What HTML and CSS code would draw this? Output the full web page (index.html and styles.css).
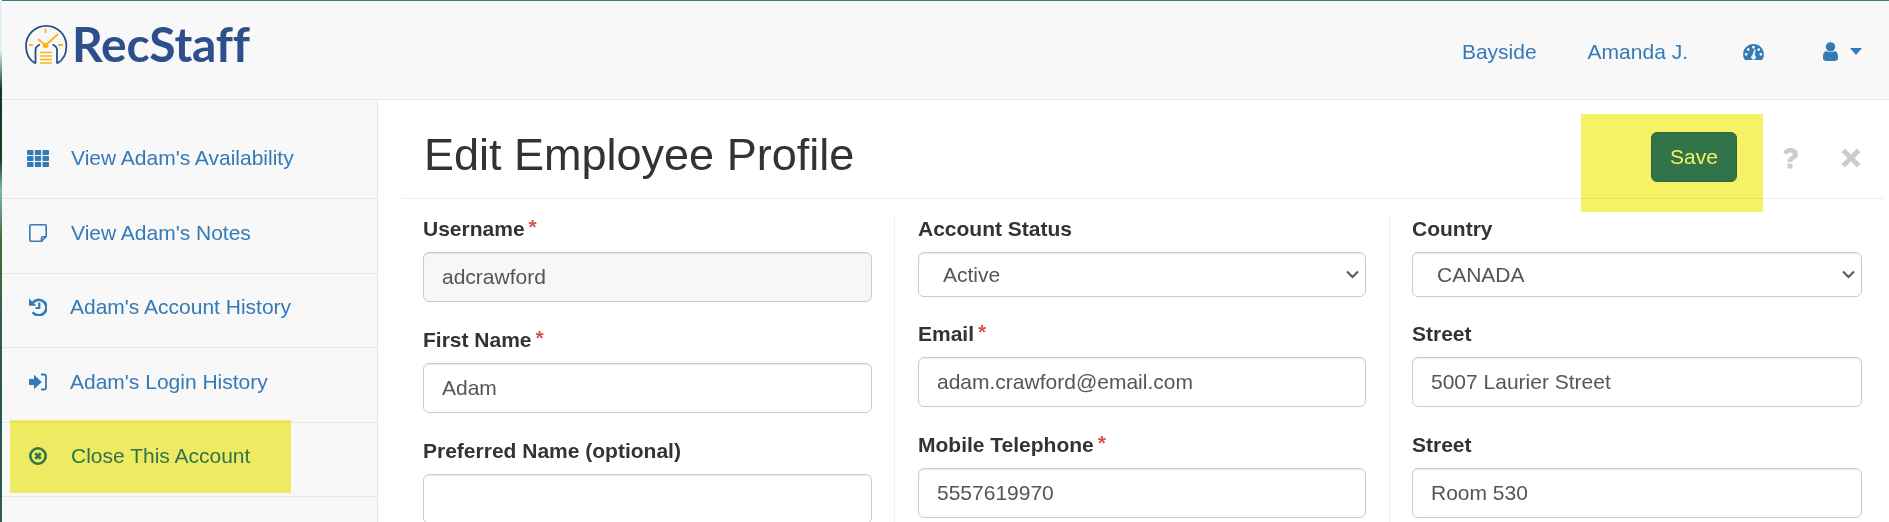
FILE: index.html
```html
<!DOCTYPE html>
<html lang="en">
  <head>
    <meta charset="UTF-8" />
    <meta name="viewport" content="width=device-width, initial-scale=1.0" />
    <title>Edit Employee Profile</title>
    <link rel="stylesheet" href="styles.css">
  </head>
  <body>
    <header class="navbar">
      <a class="brand" href="#">
        <svg class="brand-mark" viewBox="0 0 44 42" width="44" height="42">
          <path d="M10.500 39.500 C4 36 1 29 1 22 A20.200 20.200 0 0 1 41.400 22 C41.400 29 38.500 36 32 39.500" fill="none" stroke="#2d4f8b" stroke-width="1.800" />
          <path d="M10.500 39.500 V26 C10.500 23 12.500 21.500 15 20.500 M32 39.500 V26 C32 23 30 21.500 27.500 20.500" fill="none" stroke="#2d4f8b" stroke-width="1.800" />
          <path d="M13 15 L20.500 21.500 L33 10 M20.500 5 V9 M4 21 H8 M33 21 H38" fill="none" stroke="#fbb616" stroke-width="1.800" />
          <circle cx="20.500" cy="21.500" r="2.800" fill="#fbb616" />
          <path d="M15 28.500 H27 M15 32 H27 M15 35.500 H27 M15 39 H27" fill="none" stroke="#fbb616" stroke-width="1.600" />
        </svg>
        <span class="brand-name">RecStaff</span>
      </a>
      <nav class="top-nav">
        <a href="#" class="nav-bayside">Bayside</a>
        <a href="#" class="nav-user">Amanda J.</a>
        <a href="#" class="nav-dash">
          <svg viewBox="0 0 22 18" width="21" height="17"><path fill="#337ab7" fill-rule="evenodd" d="M11 1 C5 1 0 5.800 0 11.800 C0 13.800 .5 15.700 1.500 17.300 C1.700 17.700 2.100 18 2.500 18 H19.500 C19.900 18 20.300 17.700 20.500 17.300 C21.500 15.700 22 13.800 22 11.800 C22 5.800 17 1 11 1 Z M11 3 A1.500 1.500 0 1 1 11 6 A1.500 1.500 0 0 1 11 3 Z M5.500 5.500 A1.500 1.500 0 1 1 5.500 8.500 A1.500 1.500 0 0 1 5.500 5.500 Z M3.200 10.500 A1.500 1.500 0 1 1 3.200 13.500 A1.500 1.500 0 0 1 3.200 10.500 Z M18.800 10.500 A1.500 1.500 0 1 1 18.800 13.500 A1.500 1.500 0 0 1 18.800 10.500 Z M16.500 5.500 A1.500 1.500 0 1 1 16.500 8.500 A1.500 1.500 0 0 1 16.500 5.500 Z M13.300 7 L12.300 13 A2.400 2.400 0 1 1 9.800 13 L12 6.800 Z" /></svg>
        </a>
        <a href="#" class="nav-account">
          <svg viewBox="0 0 16 20" width="15" height="19"><path fill="#337ab7" d="M8 0 A5 5 0 1 1 8 10 A5 5 0 0 1 8 0 Z M3.500 9.500 C5 11 11 11 12.500 9.500 C15 10 16 12.500 16 15.500 V17 C16 18.800 14.800 20 13 20 H3 C1.200 20 0 18.800 0 17 V15.500 C0 12.500 1 10 3.500 9.500 Z" /></svg>
          <span class="caret"></span>
        </a>
      </nav>
    </header>
    <div class="page">
      <aside class="sidebar">
        <a class="side-link side-link-grid" href="#">
          <svg class="side-icon" viewBox="0 0 22 17"><path fill="#337ab7" d="M0 1 Q0 0 1 0 H5.500 Q6.500 0 6.500 1 V4 Q6.500 5 5.500 5 H1 Q0 5 0 4 Z M7.800 1 Q7.800 0 8.800 0 H13.200 Q14.200 0 14.200 1 V4 Q14.200 5 13.200 5 H8.800 Q7.800 5 7.800 4 Z M15.500 1 Q15.500 0 16.500 0 H21 Q22 0 22 1 V4 Q22 5 21 5 H16.500 Q15.500 5 15.500 4 Z M0 7 Q0 6 1 6 H5.500 Q6.500 6 6.500 7 V10 Q6.500 11 5.500 11 H1 Q0 11 0 10 Z M7.800 7 Q7.800 6 8.800 6 H13.200 Q14.200 6 14.200 7 V10 Q14.200 11 13.200 11 H8.800 Q7.800 11 7.800 10 Z M15.500 7 Q15.500 6 16.500 6 H21 Q22 6 22 7 V10 Q22 11 21 11 H16.500 Q15.500 11 15.500 10 Z M0 13 Q0 12 1 12 H5.500 Q6.500 12 6.500 13 V16 Q6.500 17 5.500 17 H1 Q0 17 0 16 Z M7.800 13 Q7.800 12 8.800 12 H13.200 Q14.200 12 14.200 13 V16 Q14.200 17 13.200 17 H8.800 Q7.800 17 7.800 16 Z M15.500 13 Q15.500 12 16.500 12 H21 Q22 12 22 13 V16 Q22 17 21 17 H16.500 Q15.500 17 15.500 16 Z" /></svg>
          <span class="side-label">View Adam's Availability</span>
        </a>
        <a class="side-link" href="#">
          <svg class="side-icon" viewBox="0 0 18 18"><path fill="none" stroke="#337ab7" stroke-width="1.600" d="M2 .8 H16 Q17.200 .8 17.200 2 V12.500 L12.500 17.200 H2 Q.8 17.200 .8 16 V2 Q.8 .8 2 .8 Z" /><path fill="none" stroke="#337ab7" stroke-width="1.600" d="M12.500 17.200 V14 Q12.500 12.800 13.700 12.800 H17.200" /></svg>
          <span class="side-label">View Adam's Notes</span>
        </a>
        <a class="side-link side-link-tight" href="#">
          <svg class="side-icon" viewBox="0 0 18 18"><path fill="none" stroke="#337ab7" stroke-width="2.600" d="M3.800 4.600 A7.700 7.700 0 1 1 3.600 14.200" /><path fill="#337ab7" d="M0 .5 L7.500 7.800 H0 Z" /><path fill="none" stroke="#337ab7" stroke-width="2.200" d="M10.300 4.500 V10 H6.500" /></svg>
          <span class="side-label">Adam's Account History</span>
        </a>
        <a class="side-link side-link-tight" href="#">
          <svg class="side-icon" viewBox="0 0 18 18"><path fill="#337ab7" d="M0 6 H5 V1.800 L12.800 9 L5 16.200 V12 H0 Z" /><path fill="none" stroke="#337ab7" stroke-width="1.800" d="M12 1.500 H15 Q17 1.500 17 3.500 V14.500 Q17 16.500 15 16.500 H12" /></svg>
          <span class="side-label">Adam's Login History</span>
        </a>
        <a class="side-link" href="#">
          <svg class="side-icon" viewBox="0 0 18 18"><circle cx="9" cy="9" r="7.700" fill="none" stroke="#337ab7" stroke-width="2.600" /><path fill="none" stroke="#337ab7" stroke-width="2.800" d="M6.300 6.300 L11.700 11.700 M11.700 6.300 L6.300 11.700" /></svg>
          <span class="side-label">Close This Account</span>
        </a>
      </aside>
      <main class="content">
        <div class="title-bar">
          <h1>Edit Employee Profile</h1>
          <div class="title-actions">
            <button class="btn-save" type="button">Save</button>
            <svg class="action-help" viewBox="0 0 16 21" width="16" height="21"><path fill="#ccc" d="M5.500 15.500 H10.500 V20.500 H5.500 Z M8.200 0 C12.500 0 16 2.500 16 6.200 C16 9 14.200 10.200 12.500 11.200 C11.200 12 10.500 12.500 10.500 14 H5.500 C5.500 11.200 6.800 9.800 8.500 8.800 C9.800 8 10.800 7.500 10.800 6.400 C10.800 5.200 9.600 4.500 8.200 4.500 C6.800 4.500 5.500 5.300 4.300 6.800 L1 4.200 C2.800 1.500 5 0 8.200 0 Z" /></svg>
            <svg class="action-close" viewBox="0 0 20 20" width="20" height="20"><path fill="#ccc" d="M4 0.500 L10 6.500 L16 0.500 L19.500 4 L13.500 10 L19.500 16 L16 19.500 L10 13.500 L4 19.500 L0.500 16 L6.500 10 L0.500 4 Z" /></svg>
          </div>
        </div>
        <form class="profile-form">
          <div class="form-col">
            <label class="field"><span class="field-label">Username<em>*</em></span><input type="text" value="adcrawford" readonly class="is-disabled" /></label>
            <label class="field"><span class="field-label">First Name<em>*</em></span><input type="text" value="Adam" /></label>
            <label class="field"><span class="field-label">Preferred Name (optional)</span><input type="text" /></label>
          </div>
          <div class="form-col form-col-mid">
            <label class="field field-select"><span class="field-label">Account Status</span><select><option>Active</option></select></label>
            <label class="field"><span class="field-label">Email<em>*</em></span><input type="text" value="adam.crawford@email.com" /></label>
            <label class="field"><span class="field-label">Mobile Telephone<em>*</em></span><input type="text" value="5557619970" /></label>
          </div>
          <div class="form-col form-col-end">
            <label class="field field-select"><span class="field-label">Country</span><select><option>CANADA</option></select></label>
            <label class="field"><span class="field-label">Street</span><input type="text" value="5007 Laurier Street" /></label>
            <label class="field"><span class="field-label">Street</span><input type="text" value="Room 530" /></label>
          </div>
        </form>
      </main>
    </div>
    <div class="mark mark-side"></div>
    <div class="mark mark-save"></div>
    <div class="photo-edge"></div>
  </body>
</html>
```

FILE: styles.css
```css
:root {
  --link-color: #337ab7;
  --line-color: #e7e7e7;
  --text-color: #333;
  --input-text: #555;
  --font-family: "Liberation Sans", Arial, sans-serif;
}
* {
  margin: 0;
  padding: 0;
  box-sizing: border-box;
}
html,
body {
  height: 522px;
  overflow: hidden;
}
body {
  background-color: #f8f8f8;
  font-family: var(--font-family);
  font-size: 21px;
  color: var(--text-color);
  border-top: 1px solid #2e7f82;
}
a {
  color: var(--link-color);
  text-decoration: none;
}
.navbar {
  height: 99px;
  display: flex;
  justify-content: space-between;
  align-items: flex-start;
  border-bottom: 1px solid var(--line-color);
}
.brand {
  display: flex;
  align-items: flex-start;
  margin: 23px 0 0 25px;
}
.brand-name {
  font-family: Lato, sans-serif;
  font-weight: 700;
  font-size: 48px;
  line-height: 40px;
  letter-spacing: -0.2px;
  color: #2d4f8b;
  margin-left: 3px;
}
.top-nav {
  display: flex;
  align-items: center;
  margin-top: 37px;
  margin-right: 27px;
}
.nav-bayside {
  margin-right: 51px;
  padding-top: 2px;
}
.nav-user {
  margin-right: 55px;
  padding-top: 2px;
}
.nav-dash {
  display: flex;
  margin-right: 59px;
}
.nav-account {
  display: flex;
  align-items: center;
}
.caret {
  width: 0;
  height: 0;
  margin-left: 12px;
  border-top: 7px solid var(--link-color);
  border-left: 6px solid transparent;
  border-right: 6px solid transparent;
}
.page {
  display: flex;
  height: 422px;
  overflow: hidden;
}
.sidebar {
  width: 378px;
  flex-shrink: 0;
  border-right: 1px solid var(--line-color);
}
.side-link {
  height: 74.500px;
  display: flex;
  align-items: center;
  padding: 0 0 6px 29px;
  border-bottom: 1px solid var(--line-color);
}
.side-link-grid {
  height: 99px;
  padding: 18px 0 0 27px;
}
.side-icon {
  width: 18px;
  height: 18px;
  margin-right: 24px;
  flex-shrink: 0;
}
.side-link-grid .side-icon {
  width: 22px;
  height: 17px;
  margin-right: 22px;
}
.side-link-tight .side-icon {
  margin-right: 23px;
}
.content {
  flex: 1;
  background-color: #fff;
  padding: 0 4px 0 23px;
  overflow: hidden;
}
.title-bar {
  height: 99px;
  display: flex;
  justify-content: space-between;
  align-items: center;
  border-bottom: 1px solid #eee;
  padding: 16px 0 0 23px;
}
h1 {
  font-size: 45px;
  font-weight: 400;
  line-height: 1.1;
  margin-bottom: 4px;
}
.title-actions {
  display: flex;
  align-items: center;
}
.btn-save {
  width: 86px;
  height: 50px;
  background-color: var(--link-color);
  border: 1px solid #2e6da4;
  border-radius: 6px;
  color: #fff;
  font-family: var(--font-family);
  font-size: 21px;
}
.action-help {
  margin: 2px 0 0 45px;
}
.action-close {
  margin: 2px 24px 0 43px;
}
.profile-form {
  display: grid;
  grid-template-columns: 493px 496px 1fr;
  margin-top: 15px;
}
.form-col {
  padding: 0 22px;
}
.form-col-mid {
  padding: 0 23px;
  border-left: 1px solid #eee;
  border-right: 1px solid #eee;
}
.form-col-end {
  padding: 0 23px 0 22px;
}
.field {
  display: block;
  margin-bottom: 23px;
}
.field-select {
  margin-bottom: 22px;
}
.field-label {
  display: block;
  font-weight: 700;
  line-height: 30px;
  margin-bottom: 8px;
}
.field-label em {
  color: #d9534f;
  font-style: normal;
  margin-left: 4px;
  line-height: 0;
  vertical-align: 2px;
}
input,
select {
  display: block;
  width: 100%;
  height: 50px;
  border: 1px solid #ccc;
  border-radius: 6px;
  padding: 0 18px;
  font-family: var(--font-family);
  font-size: 21px;
  color: var(--input-text);
  background-color: #fff;
  box-shadow: inset 0 1px 1px rgba(0, 0, 0, 0.075);
}
select {
  height: 45px;
  padding: 0 24px;
  appearance: none;
  background-image: url("data:image/svg+xml,%3Csvg xmlns='http://www.w3.org/2000/svg' width='13' height='9'%3E%3Cpath d='M1 1.500 L6.500 7 L12 1.500' fill='none' stroke='%23555' stroke-width='2'/%3E%3C/svg%3E");
  background-repeat: no-repeat;
  background-position: right 6px center;
}
.is-disabled {
  background-color: #f7f7f7;
}
.mark {
  position: absolute;
  background-color: #f5f266;
  mix-blend-mode: multiply;
}
.mark-side {
  left: 10px;
  top: 420px;
  width: 281px;
  height: 73px;
}
.mark-save {
  left: 1581px;
  top: 114px;
  width: 182px;
  height: 98px;
}
.photo-edge {
  position: absolute;
  left: 0;
  top: 0;
  width: 2px;
  height: 522px;
  background: linear-gradient(#dff1fb 0, #dff1fb 50px, #12351f 90px, #16421f 160px, #7fb7b0 190px, #3e6e3d 240px, #23574f 400px, #2d5d50 522px);
}
```
